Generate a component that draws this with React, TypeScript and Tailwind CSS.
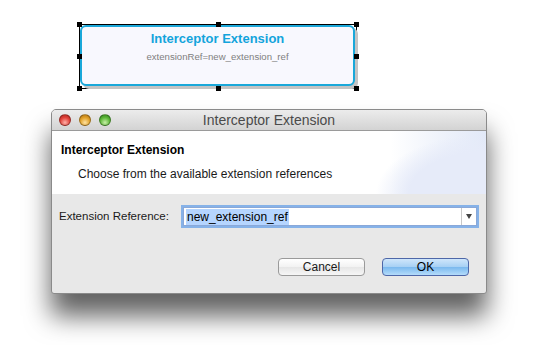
import React from "react";

const Handle = ({ className }: { className: string }) => (
  <span className={`absolute w-[5px] h-[5px] bg-black ${className}`} />
);

const NodeBox = () => {
  return (
    <div className="relative w-[278px] h-[65px] ml-[79px] border border-black">
      <div className="w-[275px] h-[61px] rounded-[6px] border-2 border-[#1aa8da] bg-[#f8f8fe] shadow-[3px_3px_0_#c4c4c4] flex flex-col items-center">
        <div className="mt-[3px] text-[13px] font-bold text-[#13a4dc] leading-[18px]">Interceptor Extension</div>
        <div className="mt-[3px] text-[9.6px] text-[#808080] leading-[12px]">extensionRef=new_extension_ref</div>
      </div>
      <Handle className="-left-[3px] -top-[3px]" />
      <Handle className="left-[136px] -top-[3px]" />
      <Handle className="-right-[3px] -top-[3px]" />
      <Handle className="-left-[3px] top-[29px]" />
      <Handle className="-right-[3px] top-[29px]" />
      <Handle className="-left-[3px] -bottom-[3px]" />
      <Handle className="left-[136px] -bottom-[3px]" />
      <Handle className="-right-[3px] -bottom-[3px]" />
    </div>
  );
};

const Light = ({ className }: { className: string }) => (
  <span className={`w-[12px] h-[12px] rounded-full border border-black/30 ${className}`} />
);

const Dialog = () => {
  return (
    <div className="ml-[51px] mt-[20px] w-[436px] h-[185px] rounded-t-[5px] rounded-b-[3px] border border-[#8a8a8a] bg-[#e8e8e8] shadow-[0_22px_26px_rgba(0,0,0,0.62)] flex flex-col overflow-hidden">
      <div className="relative h-[21px] shrink-0 flex items-center bg-[linear-gradient(#ececec,#d3d3d3)] border-b border-[#9a9a9a]">
        <div className="flex gap-[8px] pl-[7px]">
          <Light className="bg-[radial-gradient(circle_at_50%_75%,#ffb0a8,#e0413a_55%,#a8231c)]" />
          <Light className="bg-[radial-gradient(circle_at_50%_75%,#ffe2a0,#e0a028_55%,#a86c10)]" />
          <Light className="bg-[radial-gradient(circle_at_50%_75%,#c8f0a8,#5cb638_55%,#2f7e1c)]" />
        </div>
        <div className="absolute inset-0 flex items-center justify-center text-[14px] text-[#4a4a4a]">Interceptor Extension</div>
      </div>
      <div className="h-[63px] shrink-0 pl-[9px] pt-[11px] bg-[radial-gradient(ellipse_110px_60px_at_100%_100%,#e6ebf9_70%,transparent_100%),linear-gradient(to_right,#ffffff_78%,#eef2fb_90%,#e2e9f8)]">
        <div className="text-[12px] font-bold text-black leading-[16px]">Interceptor Extension</div>
        <div className="mt-[9px] ml-[17px] text-[12px] text-[#1a1a1a] leading-[15px]">Choose from the available extension references</div>
      </div>
      <div className="flex-1 flex flex-col px-[7px]">
        <div className="flex items-center mt-[13px]">
          <span className="w-[124px] text-[11.5px] text-[#1a1a1a]">Extension Reference:</span>
          <div className="flex-1 h-[19px] mr-[2px] flex bg-white border border-[#8aa8d8] shadow-[0_0_0_2px_#86b2e8]">
            <div className="flex-1 flex items-center pl-[2px]">
              <span className="bg-[#b5d5ff] text-[12px] leading-[16px] px-[1px] text-black">new_extension_ref</span>
            </div>
            <div className="w-[15px] border-l border-[#c8c8c8] flex items-center justify-center">
              <span className="w-0 h-0 border-l-[3.5px] border-r-[3.5px] border-t-[5px] border-l-transparent border-r-transparent border-t-[#444]" />
            </div>
          </div>
        </div>
        <div className="flex justify-end gap-[17px] mt-[32px] mr-[10px]">
          <button className="w-[87px] h-[18px] rounded-[4px] border border-[#9a9a9a] bg-[linear-gradient(#ffffff,#f2f2f2_50%,#e6e6e6_51%,#f6f6f6)] text-[12px] leading-none text-[#1a1a1a]">Cancel</button>
          <button className="w-[87px] h-[18px] rounded-[4px] border border-[#4e67a8] bg-[linear-gradient(#cfe6fb,#a6d0f4_50%,#7ab8ee_51%,#b4dcfa)] text-[12px] leading-none text-black">OK</button>
        </div>
      </div>
    </div>
  );
};

export default function App() {
  return (
    <div className="w-[544px] h-[345px] bg-white pt-[24px] overflow-hidden font-['Liberation_Sans',Arial,sans-serif]">
      <NodeBox />
      <Dialog />
    </div>
  );
}
